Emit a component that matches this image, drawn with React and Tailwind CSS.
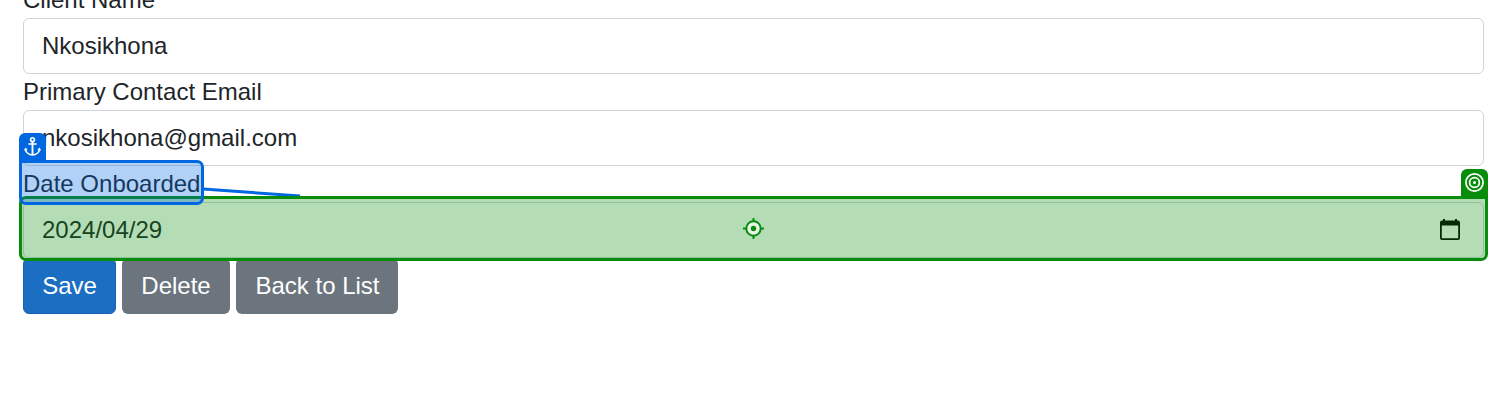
function Field({ label, value, icon, children }) {
  return (
    <div className="relative">
      <label className="block h-9 leading-9">{label}</label>
      <div className="flex h-14 items-center justify-between rounded-md border border-[#ced4da] bg-white pr-[23px] pl-[18px]">
        <span>{value}</span>
        {icon}
      </div>
      {children}
    </div>
  );
}

function CalendarIcon() {
  return (
    <svg className="h-[22px] w-5" viewBox="0 0 20 22" fill="#000">
      <path
        fillRule="evenodd"
        d="M3 0h2v1.500h10V0h2v1.500h1a2 2 0 0 1 2 2V19a2 2 0 0 1-2 2H2a2 2 0 0 1-2-2V3.500a2 2 0 0 1 2-2h1zM1.800 6.500v12.700h16.400V6.500z"
      />
    </svg>
  );
}

function AnchorIcon() {
  return (
    <svg className="h-[19px] w-[17px]" viewBox="0 0 17 19" fill="none" stroke="#fff" strokeWidth="1.6">
      <circle cx="8.5" cy="2.7" r="1.9" />
      <path d="M8.5 4.600V18" strokeWidth="1.900" />
      <path d="M4.300 7h8.400M1.400 11.800c.4 3.700 3.400 6.100 7.100 6.100s6.700-2.400 7.100-6.100" />
      <path d="M.1 13.700 1.200 10.500 3.700 12.700zM16.900 13.700 15.800 10.500 13.300 12.700z" fill="#fff" stroke="none" />
    </svg>
  );
}

function TargetIcon() {
  return (
    <svg className="size-5" viewBox="0 0 20 20" fill="none" stroke="#fff">
      <circle cx="9.500" cy="9.500" r="8.600" strokeWidth="1.700" />
      <circle cx="9.500" cy="9.500" r="4.900" strokeWidth="1.700" />
      <circle cx="9.500" cy="9.500" r="1.500" fill="#fff" stroke="none" />
    </svg>
  );
}

function CrosshairIcon() {
  return (
    <svg className="h-[22px] w-[23px]" viewBox="0 0 23 22" stroke="#078c0c" strokeWidth="2">
      <circle cx="11.500" cy="10.500" r="7.200" fill="#e9f5e9" />
      <path d="M11.500 0V3.500M11.500 17.500V21M1 10.500H4.500M18.500 10.500H22" />
      <circle cx="11.500" cy="10.500" r="2.700" fill="#078c0c" stroke="none" />
    </svg>
  );
}

export default function App() {
  return (
    <div className="h-[401px] overflow-hidden bg-white font-['Liberation_Sans',Arial,sans-serif] text-2xl text-[#212529]">
      <main className="-mt-[18px] pr-[23px] pl-[23px]">
        <Field label="Client Name" value="Nkosikhona" />
        <Field label="Primary Contact Email" value="nkosikhona@gmail.com" />
        <Field label="Date Onboarded" value="2024/04/29" icon={<CalendarIcon />}>
          <svg className="absolute top-5 left-[180px] h-[12px] w-[98px]" viewBox="0 0 98 12" stroke="#0067e0" strokeWidth="3">
            <path d="M0 3 97 10" />
          </svg>
          <div className="absolute top-[30px] -right-1 -left-1 flex h-[65px] items-center justify-center rounded-[7px] rounded-tr-none border-3 border-[#078c0c] bg-[#078e0c]/30">
            <CrosshairIcon />
          </div>
          <div className="absolute top-[3px] -right-1 flex h-[28px] w-[27px] items-start justify-center rounded-t-md bg-[#078c0c] pt-1">
            <TargetIcon />
          </div>
          <div className="absolute -top-[6px] -left-1 h-[45px] w-[185px] rounded-[7px] rounded-tl-none border-3 border-[#0067e0] bg-[#0067e0]/30" />
          <div className="absolute -top-[33px] -left-1 flex h-[28px] w-[27px] items-start justify-center rounded-t-md bg-[#0067e0] pt-1">
            <AnchorIcon />
          </div>
        </Field>
        <div className="flex gap-1.5 text-white">
          <button className="h-14 w-[93px] rounded-md border border-[#1b63b1] bg-[#1b6ec2]">Save</button>
          <button className="h-14 w-[108px] rounded-md bg-[#6c757d]">Delete</button>
          <button className="h-14 w-[162px] rounded-md bg-[#6c757d] pl-px">Back to List</button>
        </div>
      </main>
    </div>
  );
}
